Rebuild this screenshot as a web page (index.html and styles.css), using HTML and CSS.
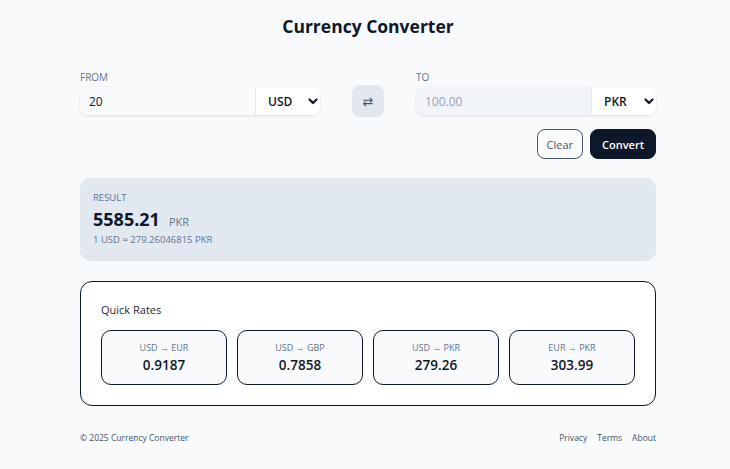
FILE: index.html
```html
<!DOCTYPE html>
<html lang="en">
<head>
<meta charset="utf-8">
<title>Currency Converter</title>
<link rel="stylesheet" href="styles.css">
</head>
<body>
<main class="page">
  <h1 class="title">Currency Converter</h1>

  <section class="converter">
    <div class="field">
      <label class="label">FROM</label>
      <div class="input-group">
        <input class="amount" type="text" value="20">
        <div class="select"><span>USD</span><svg class="chev" viewBox="0 0 12 12" width="12" height="12"><path d="M2.5 4.5l3.5 3.5 3.5-3.5" fill="none" stroke="#0f172a" stroke-width="2.2" stroke-linecap="round" stroke-linejoin="round"/></svg></div>
      </div>
    </div>
    <button class="swap" type="button">⇄</button>
    <div class="field">
      <label class="label">TO</label>
      <div class="input-group">
        <input class="amount disabled" type="text" placeholder="100.00" disabled>
        <div class="select"><span>PKR</span><svg class="chev" viewBox="0 0 12 12" width="12" height="12"><path d="M2.5 4.5l3.5 3.5 3.5-3.5" fill="none" stroke="#0f172a" stroke-width="2.2" stroke-linecap="round" stroke-linejoin="round"/></svg></div>
      </div>
    </div>
  </section>

  <div class="actions">
    <button class="btn btn-outline" type="button">Clear</button>
    <button class="btn btn-dark" type="button">Convert</button>
  </div>

  <section class="result">
    <div class="result-label">RESULT</div>
    <div class="result-main"><span class="result-value">5585.21</span><span class="result-cur">PKR</span></div>
    <div class="result-rate">1 USD ≈ 279.26046815 PKR</div>
  </section>

  <section class="rates">
    <h2 class="rates-title">Quick Rates</h2>
    <div class="rates-grid">
      <div class="tile"><div class="tile-pair">USD → EUR</div><div class="tile-value">0.9187</div></div>
      <div class="tile"><div class="tile-pair">USD → GBP</div><div class="tile-value">0.7858</div></div>
      <div class="tile"><div class="tile-pair">USD → PKR</div><div class="tile-value">279.26</div></div>
      <div class="tile"><div class="tile-pair">EUR → PKR</div><div class="tile-value">303.99</div></div>
    </div>
  </section>

  <footer class="footer">
    <span>© 2025 Currency Converter</span>
    <nav class="links"><a href="#">Privacy</a><a href="#">Terms</a><a href="#">About</a></nav>
  </footer>
</main>
</body>
</html>
```

FILE: styles.css
```css
* { box-sizing: border-box; }
html, body { margin: 0; padding: 0; }
body {
  background: #f8fafc;
  color: #0f172a;
  font-family: "Open Sans", "Noto Sans", Arial, sans-serif;
}
.page {
  width: 576px;
  margin-left: 80px;
  padding-top: 12px;
}
.title {
  margin: 0;
  text-align: center;
  font-size: 17.5px;
  font-weight: 700;
  line-height: 28px;
}
.converter {
  display: grid;
  grid-template-columns: 1fr 32px 1fr;
  column-gap: 32px;
  align-items: end;
  margin-top: 30px;
}
.field { display: flex; flex-direction: column; }
.label {
  font-size: 10px;
  line-height: 14px;
  color: #64748b;
  margin-bottom: 3px;
}
.input-group {
  display: flex;
  height: 28px;
  background: #fff;
  border-radius: 8px;
  box-shadow: 0 1px 3px rgba(15, 23, 42, 0.12);
  overflow: hidden;
}
.amount {
  flex: 1;
  min-width: 0;
  border: none;
  outline: none;
  background: #f8fafc;
  font-family: inherit;
  font-size: 12px;
  color: #0f172a;
  padding: 0 9px;
}
.amount.disabled { background: #f1f5f9; }
.amount.disabled::placeholder { color: #94a3b8; }
.select {
  width: 65px;
  border-left: 1px solid #e2e8f0;
  background: #fff;
  display: flex;
  align-items: center;
  justify-content: space-between;
  padding: 0 1px 0 12px;
  font-size: 12px;
  font-weight: 600;
}
.chev { display: block; }
.swap {
  width: 32px;
  height: 32px;
  margin-bottom: -2px;
  border: none;
  border-radius: 8px;
  background: #e2e8f0;
  color: #475569;
  font-family: "DejaVu Sans", sans-serif;
  font-size: 13px;
  padding: 0;
}
.actions {
  display: flex;
  justify-content: flex-end;
  gap: 7px;
  margin-top: 14px;
}
.btn {
  height: 30px;
  border-radius: 8px;
  font-family: inherit;
  font-size: 11px;
  padding: 0 9px;
}
.btn-outline {
  background: #f8fafc;
  border: 1px solid #475569;
  color: #475569;
}
.btn-dark {
  background: #0f172a;
  border: 1px solid #0f172a;
  color: #fff;
  font-weight: 600;
  padding: 0 11px;
}
.result {
  margin-top: 19px;
  background: #e2e8f0;
  border-radius: 10px;
  padding: 13px 13px 14px;
  height: 83px;
}
.result-label {
  font-size: 9.5px;
  line-height: 13px;
  color: #64748b;
}
.result-main {
  display: flex;
  align-items: baseline;
  gap: 9px;
  margin-top: 4px;
}
.result-value {
  font-size: 18px;
  font-weight: 700;
  line-height: 22px;
}
.result-cur {
  font-size: 11px;
  color: #64748b;
}
.result-rate {
  font-size: 9.5px;
  line-height: 13px;
  color: #64748b;
  margin-top: 3px;
}
.rates {
  margin-top: 20px;
  background: #fff;
  border: 1px solid #0f172a;
  border-radius: 12px;
  padding: 19px 20px 20px;
}
.rates-title {
  margin: 0;
  font-size: 11px;
  font-weight: 500;
  line-height: 18px;
  color: #1e293b;
}
.rates-grid {
  display: grid;
  grid-template-columns: repeat(4, 1fr);
  gap: 10px;
  margin-top: 11px;
}
.tile {
  height: 55px;
  background: #f8fafc;
  border: 1px solid #0f172a;
  border-radius: 10px;
  display: flex;
  flex-direction: column;
  align-items: center;
  justify-content: center;
}
.tile-pair {
  font-size: 9px;
  line-height: 13px;
  color: #64748b;
}
.tile-value {
  font-size: 13.5px;
  font-weight: 600;
  line-height: 19px;
  margin-top: 2px;
}
.footer {
  display: flex;
  justify-content: space-between;
  align-items: center;
  margin-top: 26px;
  font-size: 8.5px;
  color: #475569;
}
.links { display: flex; gap: 10px; }
.links a { color: #475569; text-decoration: none; }
```
